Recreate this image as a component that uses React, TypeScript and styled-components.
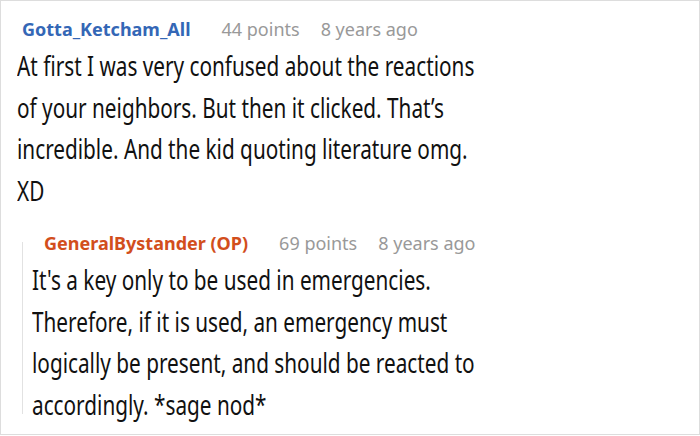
import React from "react";
import styled, { createGlobalStyle } from "styled-components";

const GlobalStyle = createGlobalStyle`
    html, body {
        margin:0;
        padding:0;
        background:#fff;
    }
    body {
        font-family:"Noto Sans", "Open Sans", sans-serif;
    }
`

// the source text is set narrow, so the body copy is squeezed horizontally
const SQUEEZE = 0.783

const Frame = styled.div`
    box-sizing:border-box;
    width:700px;
    height:435px;
    border:1px solid #dddddd;
    overflow:hidden;
    padding:11px 0 0 16px;
`

const Comment = styled.div`
    display:flex;
    flex-direction:column;
    align-items:flex-start;
`

const Meta = styled.div<{ $indent: number }>`
    display:flex;
    align-items:baseline;
    gap:21px;
    padding-left:${p => p.$indent}px;
    font-size:18px;
    line-height:34px;
    white-space:nowrap;
`

const Author = styled.span<{ $op?: boolean }>`
    font-weight:700;
    color:${p => p.$op ? '#d24e1c' : '#3467b6'};
    margin-right:10px;
`

const Stat = styled.span`
    color:#999999;
`

const Body = styled.p<{ $span: number }>`
    margin:0;
    flex:none;
    width:${p => Math.round(p.$span / SQUEEZE)}px;
    font-size:26.5px;
    line-height:41.5px;
    color:#111111;
    transform:scaleX(${SQUEEZE});
    transform-origin:0 0;
`

const Reply = styled.div`
    position:relative;
    margin:14px 0 0 5px;
    padding-left:10px;
    &::before {
        content:"";
        position:absolute;
        left:0;
        top:16px;
        bottom:12px;
        width:1px;
        background:#e2e2e2;
    }
`

function App() {
    return (
        <>
            <GlobalStyle />
            <Frame>
                <Comment>
                    <Meta $indent={5}>
                        <Author>Gotta_Ketcham_All</Author>
                        <Stat>44 points</Stat>
                        <Stat>8 years ago</Stat>
                    </Meta>
                    <Body $span={465}>
                        At first I was very confused about the reactions of your neighbors. But then it clicked. That’s incredible. And the kid quoting literature omg. XD
                    </Body>
                </Comment>
                <Reply>
                    <Comment>
                        <Meta $indent={12}>
                            <Author $op>GeneralBystander (OP)</Author>
                            <Stat>69 points</Stat>
                            <Stat>8 years ago</Stat>
                        </Meta>
                        <Body $span={455}>
                            It's a key only to be used in emergencies. Therefore, if it is used, an emergency must logically be present, and should be reacted to accordingly. *sage nod*
                        </Body>
                    </Comment>
                </Reply>
            </Frame>
        </>
    )
}

export default App
